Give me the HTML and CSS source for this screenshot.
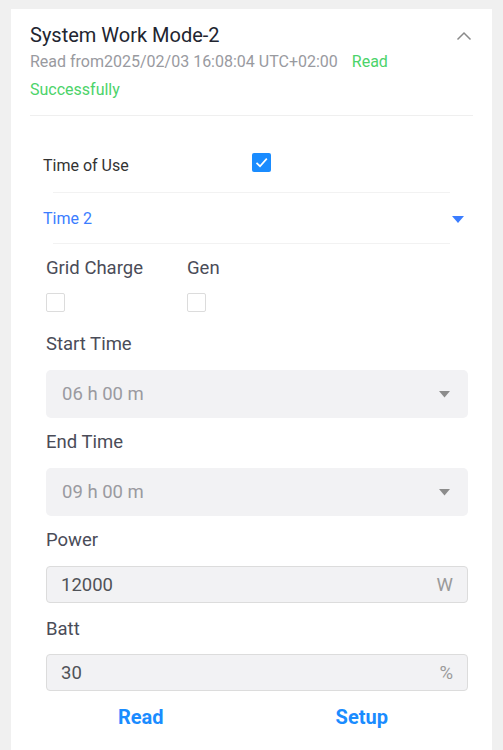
FILE: index.html
```html
<!DOCTYPE html>
<html>
<head>
<meta charset="utf-8">
<link rel="stylesheet" href="styles.css">
</head>
<body>
<div class="card">
  <div class="head">
    <div class="title-row">
      <div class="title">System Work Mode-2</div>
      <svg class="chev" width="16" height="10" viewBox="0 0 16 10"><path d="M1.5 8.5 L8 2 L14.5 8.5" fill="none" stroke="#8a8a8a" stroke-width="1.5"/></svg>
    </div>
    <div class="sub">Read from2025/02/03 16:08:04 UTC+02:00 <span class="ok first">Read</span> <span class="ok">Successfully</span></div>
  </div>
  <div class="body">
    <div class="tou-row">
      <span class="tou-label">Time of Use</span>
      <span class="cb checked"><svg width="19" height="19" viewBox="0 0 19 19"><path d="M4.5 9.8 L8 13.2 L14.8 5.6" fill="none" stroke="#fff" stroke-width="1.7"/></svg></span>
    </div>
    <div class="divider"></div>
    <div class="time-row">
      <span class="time-label">Time 2</span>
      <svg width="12" height="8" viewBox="0 0 12 8"><path d="M0 0 H12 L6 7 Z" fill="#3b7dff"/></svg>
    </div>
    <div class="divider"></div>
    <div class="checks">
      <div class="check-col">
        <div class="lbl">Grid Charge</div>
        <span class="cb"></span>
      </div>
      <div class="check-col">
        <div class="lbl">Gen</div>
        <span class="cb"></span>
      </div>
    </div>
    <div class="field first">
      <div class="lbl">Start Time</div>
      <div class="select"><span>06 h 00 m</span><svg width="11" height="7" viewBox="0 0 11 7"><path d="M0 0 H11 L5.5 6.5 Z" fill="#8c8c8c"/></svg></div>
    </div>
    <div class="field">
      <div class="lbl">End Time</div>
      <div class="select"><span>09 h 00 m</span><svg width="11" height="7" viewBox="0 0 11 7"><path d="M0 0 H11 L5.5 6.5 Z" fill="#8c8c8c"/></svg></div>
    </div>
    <div class="field">
      <div class="lbl">Power</div>
      <div class="input"><span class="val">12000</span><span class="unit">W</span></div>
    </div>
    <div class="field after-input">
      <div class="lbl">Batt</div>
      <div class="input"><span class="val">30</span><span class="unit">%</span></div>
    </div>
    <div class="actions">
      <span class="btn read">Read</span>
      <span class="btn setup">Setup</span>
    </div>
  </div>
</div>
</body>
</html>
```
FILE: styles.css
```css
html, body {
  margin: 0;
  padding: 0;
  background: #f0f0f0;
  font-family: Roboto, "Liberation Sans", sans-serif;
}
body {
  padding: 9px 11px 0 11px;
  height: 750px;
  box-sizing: border-box;
  overflow: hidden;
}
.card {
  background: #fff;
  height: 741px;
}
.head {
  margin: 0 19px;
  padding-top: 13px;
  border-bottom: 1px solid #efefef;
  height: 107px;
  box-sizing: border-box;
}
.title-row {
  display: flex;
  justify-content: space-between;
  align-items: center;
  height: 26px;
}
.title {
  font-size: 20px;
  color: #222530;
  line-height: 26px;
}
.chev {
  margin-right: 1px;
  margin-top: 1px;
}
.sub {
  font-size: 16px;
  line-height: 28px;
  color: #999a9f;
  width: 410px;
}
.ok {
  color: #4cd36a;
}
.ok.first {
  margin-left: 10px;
}
.body {
  padding: 0 24px 0 35px;
}
.tou-row {
  display: flex;
  align-items: flex-start;
  height: 76px;
  box-sizing: border-box;
  padding-top: 37px;
  margin-left: -3px;
}
.tou-label {
  font-size: 16px;
  line-height: 20px;
  color: #333;
  width: 209px;
  margin-top: 3px;
}
.cb {
  display: inline-block;
  width: 17px;
  height: 17px;
  border: 1px solid #dcdcdc;
  border-radius: 2px;
}
.cb.checked {
  width: 19px;
  height: 19px;
  border: none;
  background: #1a8cff;
}
.cb.checked svg { display: block; }
.divider {
  height: 1px;
  background: #f2f2f2;
  margin: 0 18px 0 7px;
}
.time-row {
  display: flex;
  justify-content: space-between;
  align-items: center;
  height: 50px;
  margin-left: -3px;
  margin-right: 4px;
}
.time-label {
  font-size: 16px;
  color: #3b7dff;
}
.time-row svg { margin-top: 3px; }
.checks {
  display: flex;
  padding-top: 12px;
}
.check-col {
  width: 141px;
}
.check-col .cb {
  margin-top: 13px;
}
.lbl {
  font-size: 18.5px;
  color: #4a4c58;
  line-height: 24px;
}
.field {
  margin-top: 12px;
}
.field.first { margin-top: 16px; }
.field.after-input { margin-top: 14px; }
.select {
  margin-top: 14px;
  height: 48px;
  background: #f2f2f4;
  border-radius: 5px;
  display: flex;
  align-items: center;
  justify-content: space-between;
  padding: 0 18px 0 16px;
  font-size: 18.5px;
  color: #9a9aa0;
}
.input {
  margin-top: 14px;
  height: 37px;
  box-sizing: border-box;
  background: #f2f2f4;
  border: 1px solid #dcdcdc;
  border-radius: 4px;
  display: flex;
  align-items: center;
  justify-content: space-between;
  padding: 0 14px 0 14px;
  font-size: 18.5px;
}
.field.after-input .input { margin-top: 13px; }
.input .val { color: #505258; }
.input .unit { color: #9a9a9a; }
.actions {
  display: flex;
  margin-top: 13px;
  line-height: 26px;
}
.btn {
  font-weight: bold;
  font-size: 20px;
  color: #1a8cff;
}
.btn.read { margin-left: 72px; }
.btn.setup { margin-left: 172px; }
```
